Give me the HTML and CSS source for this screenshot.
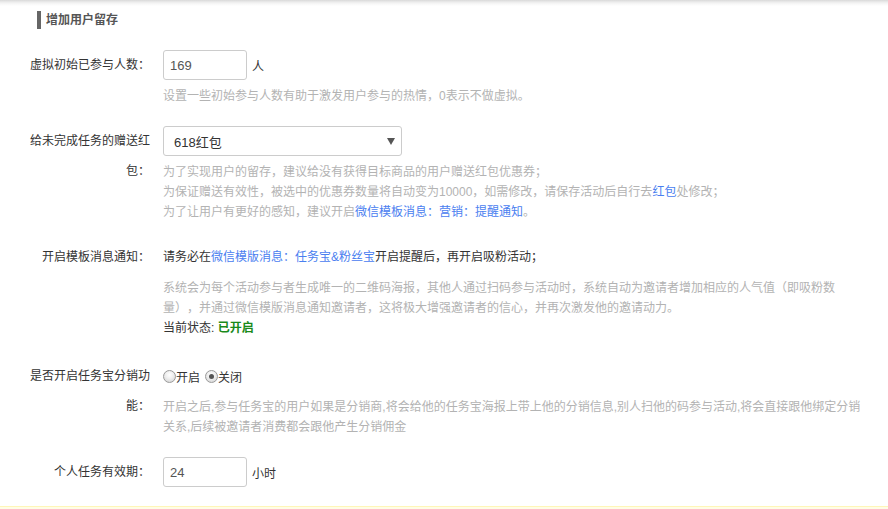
FILE: index.html
```html
<!DOCTYPE html>
<html lang="zh-CN">
<head>
<meta charset="utf-8">
<title>增加用户留存</title>
<link rel="stylesheet" href="styles.css">
</head>
<body>
<div class="page">
  <div class="section-title">增加用户留存</div>
  <div class="form">
    <div class="row">
      <div class="label">虚拟初始已参与人数：</div>
      <div class="field">
        <div class="control"><input class="text-input" type="text" value="169"><span class="unit">人</span></div>
        <p class="help">设置一些初始参与人数有助于激发用户参与的热情，0表示不做虚拟。</p>
      </div>
    </div>

    <div class="row">
      <div class="label">给未完成任务的赠送红包：</div>
      <div class="field">
        <div class="control">
          <div class="select"><span class="select-text">618红包</span><span class="select-arrow"></span></div>
        </div>
        <p class="help">为了实现用户的留存，建议给没有获得目标商品的用户赠送红包优惠券；<br>为保证赠送有效性，被选中的优惠券数量将自动变为10000，如需修改，请保存活动后自行去<a class="link">红包</a>处修改；<br>为了让用户有更好的感知，建议开启<a class="link">微信模板消息：营销：提醒通知</a>。</p>
      </div>
    </div>

    <div class="row">
      <div class="label">开启模板消息通知：</div>
      <div class="field">
        <div class="statement">请务必在<a class="link">微信模版消息：任务宝&amp;粉丝宝</a>开启提醒后，再开启吸粉活动；</div>
        <p class="help">系统会为每个活动参与者生成唯一的二维码海报，其他人通过扫码参与活动时，系统自动为邀请者增加相应的人气值（即吸粉数量），并通过微信模版消息通知邀请者，这将极大增强邀请者的信心，并再次激发他的邀请动力。</p>
        <div class="status">当前状态: <strong class="on">已开启</strong></div>
      </div>
    </div>

    <div class="row">
      <div class="label">是否开启任务宝分销功能：</div>
      <div class="field">
        <div class="control radios">
          <label class="radio"><input type="radio" name="fx">开启</label>
          <label class="radio"><input type="radio" name="fx" checked>关闭</label>
        </div>
        <p class="help">开启之后,参与任务宝的用户如果是分销商,将会给他的任务宝海报上带上他的分销信息,别人扫他的码参与活动,将会直接跟他绑定分销关系,后续被邀请者消费都会跟他产生分销佣金</p>
      </div>
    </div>

    <div class="row">
      <div class="label">个人任务有效期：</div>
      <div class="field">
        <div class="control"><input class="text-input" type="text" value="24"><span class="unit">小时</span></div>
      </div>
    </div>
  </div>
  <div class="footer"></div>
</div>
</body>
</html>
```
FILE: styles.css
```css
html, body {
  margin: 0;
  padding: 0;
  background: #fff;
}
body {
  font-family: "Liberation Sans", "Noto Sans CJK SC", sans-serif;
  font-size: 12px;
  color: #333;
  overflow: hidden;
  text-spacing-trim: space-all;
  font-feature-settings: "halt" 0, "palt" 0, "chws" 0;
}
.page {
  height: 509px;
  background: linear-gradient(to bottom, #d9d9d9 0, #ececec 2px, #f8f8f8 4px, #fff 6px) no-repeat;
  box-sizing: border-box;
  padding-top: 11px;
}
.section-title {
  margin-left: 37px;
  border-left: 4px solid #666;
  padding-left: 5px;
  height: 18px;
  line-height: 18px;
  font-size: 12px;
  font-weight: bold;
  color: #555;
}
.form {
  padding: 21px 20px 0 30px;
}
.row {
  display: flex;
  margin-bottom: 20px;
}
.row:last-child {
  margin-bottom: 0;
}
.label {
  width: 120px;
  flex: none;
  text-align: right;
  line-height: 30px;
  color: #333;
}
.field {
  flex: 1;
  margin-left: 13px;
  min-width: 0;
}
.control {
  display: flex;
  align-items: center;
  height: 30px;
}
.text-input {
  box-sizing: border-box;
  width: 84px;
  height: 30px;
  border: 1px solid #ccc;
  border-radius: 3px;
  padding: 0 6px;
  margin: 0;
  font-family: "Liberation Sans", "Noto Sans CJK SC", sans-serif;
  font-size: 13px;
  color: #555;
  outline: none;
}
.unit {
  margin-left: 5px;
  font-size: 12px;
  color: #333;
}
.select {
  box-sizing: border-box;
  width: 239px;
  height: 30px;
  border: 1px solid #ccc;
  border-radius: 3px;
  display: flex;
  align-items: center;
  justify-content: space-between;
  padding: 0 6px 0 10px;
  font-size: 13px;
  color: #333;
}
.select-arrow {
  width: 0;
  height: 0;
  border-left: 4px solid transparent;
  border-right: 4px solid transparent;
  border-top: 7px solid #555;
}
.help {
  margin: 6px 0 0;
  line-height: 20px;
  color: #b3b3b3;
}
.link {
  color: #4a80f0;
  text-decoration: none;
  cursor: pointer;
}
.statement {
  line-height: 30px;
  color: #333;
}
.status {
  line-height: 20px;
  color: #333;
  margin-bottom: 3px;
}
.on {
  color: #1a8a1a;
  font-weight: bold;
}
.radios {
  gap: 5px;
}
.radio {
  display: flex;
  align-items: center;
  color: #333;
}
.radio input {
  -webkit-appearance: none;
  appearance: none;
  box-sizing: border-box;
  width: 13px;
  height: 13px;
  margin: 0;
  border: 1px solid #9a9a9a;
  border-radius: 50%;
  background: radial-gradient(circle at 50% 35%, #ffffff 0, #f0f0f0 40%, #cfcfcf 100%);
  position: relative;
}
.radio input:checked::after {
  content: "";
  position: absolute;
  left: 3px;
  top: 3px;
  width: 5px;
  height: 5px;
  border-radius: 50%;
  background: #555;
}
.footer {
  margin-top: 19px;
  height: 10px;
  background: #fffde6;
  border-top: 1px solid #fff6b8;
}
```
